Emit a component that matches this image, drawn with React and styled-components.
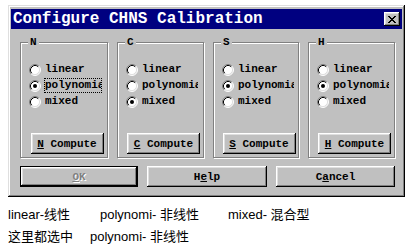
import React from 'react';
import styled, { createGlobalStyle } from 'styled-components';

const GlobalStyle = createGlobalStyle`
  html, body {
    margin: 0;
    padding: 0;
    background: #ffffff;
  }
`;

const Page = styled.div`
  width: 416px;
  height: 251px;
  padding: 5px 0 0 8px;
  box-sizing: border-box;
  overflow: hidden;
`;

const Dialog = styled.div`
  width: 397px;
  height: 192px;
  box-sizing: border-box;
  padding: 4px 3px 3px 3px;
  background: #c0c0c0;
  box-shadow: inset -1px -1px #000, inset 1px 1px #dfdfdf,
    inset -2px -2px #808080, inset 2px 2px #fff;
  display: flex;
  flex-direction: column;
  font-family: "Liberation Mono", "DejaVu Sans Mono", monospace;
`;

const TitleBar = styled.div`
  height: 20px;
  background: #000080;
  display: flex;
  align-items: center;
  justify-content: space-between;
  padding: 0 2px 0 2px;
`;

const Title = styled.span`
  color: #fff;
  font-weight: bold;
  font-size: 16px;
  line-height: 20px;
`;

const CloseButton = styled.div`
  width: 16px;
  height: 14px;
  background: #c0c0c0;
  box-shadow: inset -1px -1px #000, inset 1px 1px #fff,
    inset -2px -2px #808080, inset 2px 2px #dfdfdf;
  display: flex;
  align-items: center;
  justify-content: center;
`;

const Content = styled.div`
  padding: 13px 10px 0 9px;
  display: flex;
  flex-direction: column;
`;

const Groups = styled.div`
  display: grid;
  grid-template-columns: 88px 87px 86px 87px;
  column-gap: 9px;
`;

const Group = styled.div`
  position: relative;
  height: 116px;
  box-sizing: border-box;
  border: 1px solid #808080;
  box-shadow: inset 1px 1px #fff, 1px 1px #fff;
  padding: 19px 0 3px 8px;
  display: flex;
  flex-direction: column;
`;

const GroupLabel = styled.span`
  position: absolute;
  top: -7px;
  left: 7px;
  padding: 0 2px;
  background: #c0c0c0;
  font-size: 11px;
  font-weight: bold;
  line-height: 13px;
  color: #000;
`;

const Options = styled.div`
  display: flex;
  flex-direction: column;
  gap: 1px;
`;

const Option = styled.div`
  height: 15px;
  display: flex;
  align-items: center;
  gap: 4px;
`;

const OptionText = styled.span`
  width: 56px;
  overflow: hidden;
  white-space: nowrap;
  font-size: 11px;
  font-weight: bold;
  line-height: 13px;
  color: #000;
  border: 1px dotted ${(p) => (p.$focused ? '#000' : 'transparent')};
  margin-left: -1px;
`;

const Button = styled.div`
  height: 21px;
  box-sizing: border-box;
  background: #c0c0c0;
  display: flex;
  align-items: center;
  justify-content: center;
  font-size: 11px;
  font-weight: bold;
  color: ${(p) => (p.$disabled ? '#808080' : '#000')};
  text-shadow: ${(p) => (p.$disabled ? '1px 1px #fff' : 'none')};
  border: ${(p) => (p.$default ? '1px solid #000' : 'none')};
  box-shadow: inset -1px -1px #000, inset 1px 1px #fff,
    inset -2px -2px #808080, inset 2px 2px #dfdfdf;
`;

const ComputeButton = styled(Button)`
  width: 73px;
  margin-top: auto;
  margin-left: -2px;
  align-self: center;
`;

const Buttons = styled.div`
  margin-top: 8px;
  display: grid;
  grid-template-columns: 118px 120px 119px;
  column-gap: 9px;
`;

const Key = styled.span`
  text-decoration: underline;
`;

const Notes = styled.div`
  margin-top: 7px;
  font-family: "Liberation Sans", "Noto Sans CJK SC", sans-serif;
  font-size: 13px;
  line-height: 22px;
  color: #000;
`;

const NoteLine = styled.div`
  display: flex;
  white-space: nowrap;
`;

const NoteCell = styled.span`
  width: ${(p) => (p.$w ? `${p.$w}px` : 'auto')};
  flex: none;
`;

const Radio = ({ checked }) => (
  <svg width="12" height="12" viewBox="0 0 12 12">
    <circle cx="6" cy="6" r="5" fill="#fff" />
    <path d="M2.11 9.89A5.5 5.5 0 0 1 9.89 2.11" stroke="#808080" fill="none" />
    <path d="M9.89 2.11A5.5 5.5 0 0 1 2.11 9.89" stroke="#fff" fill="none" />
    <path d="M2.82 9.18A4.5 4.5 0 0 1 9.18 2.82" stroke="#000" fill="none" />
    <path d="M9.18 2.82A4.5 4.5 0 0 1 2.82 9.18" stroke="#dfdfdf" fill="none" />
    {checked && <circle cx="6" cy="6" r="2" fill="#000" />}
  </svg>
);

const CloseIcon = () => (
  <svg width="8" height="7" viewBox="0 0 8 7" shapeRendering="crispEdges">
    <path
      d="M0 0h2v1H0zM6 0h2v1H6zM1 1h2v1H1zM5 1h2v1H5zM2 2h4v1H2zM3 3h2v1H3zM2 4h4v1H2zM1 5h2v1H1zM5 5h2v1H5zM0 6h2v1H0zM6 6h2v1H6z"
      fill="#000"
    />
  </svg>
);

const groups = [
  { name: 'N', selected: 1, focused: true },
  { name: 'C', selected: 2 },
  { name: 'S', selected: 1 },
  { name: 'H', selected: 1 },
];

const options = ['linear', 'polynomial', 'mixed'];

export default function App() {
  return (
    <Page>
      <GlobalStyle />
      <Dialog>
        <TitleBar>
          <Title>Configure CHNS Calibration</Title>
          <CloseButton>
            <CloseIcon />
          </CloseButton>
        </TitleBar>
        <Content>
          <Groups>
            {groups.map((g) => (
              <Group key={g.name}>
                <GroupLabel>{g.name}</GroupLabel>
                <Options>
                  {options.map((o, i) => (
                    <Option key={o}>
                      <Radio checked={g.selected === i} />
                      <OptionText $focused={g.focused && g.selected === i}>{o}</OptionText>
                    </Option>
                  ))}
                </Options>
                <ComputeButton>
                  <Key>{g.name}</Key>&nbsp;Compute
                </ComputeButton>
              </Group>
            ))}
          </Groups>
          <Buttons>
            <Button $default $disabled>
              <Key>O</Key>K
            </Button>
            <Button>
              H<Key>e</Key>lp
            </Button>
            <Button>
              C<Key>a</Key>ncel
            </Button>
          </Buttons>
        </Content>
      </Dialog>
      <Notes>
        <NoteLine>
          <NoteCell $w={92}>linear-线性</NoteCell>
          <NoteCell $w={128}>polynomi- 非线性</NoteCell>
          <NoteCell>mixed- 混合型</NoteCell>
        </NoteLine>
        <NoteLine>
          <NoteCell $w={82}>这里都选中</NoteCell>
          <NoteCell>polynomi- 非线性</NoteCell>
        </NoteLine>
      </Notes>
    </Page>
  );
}
